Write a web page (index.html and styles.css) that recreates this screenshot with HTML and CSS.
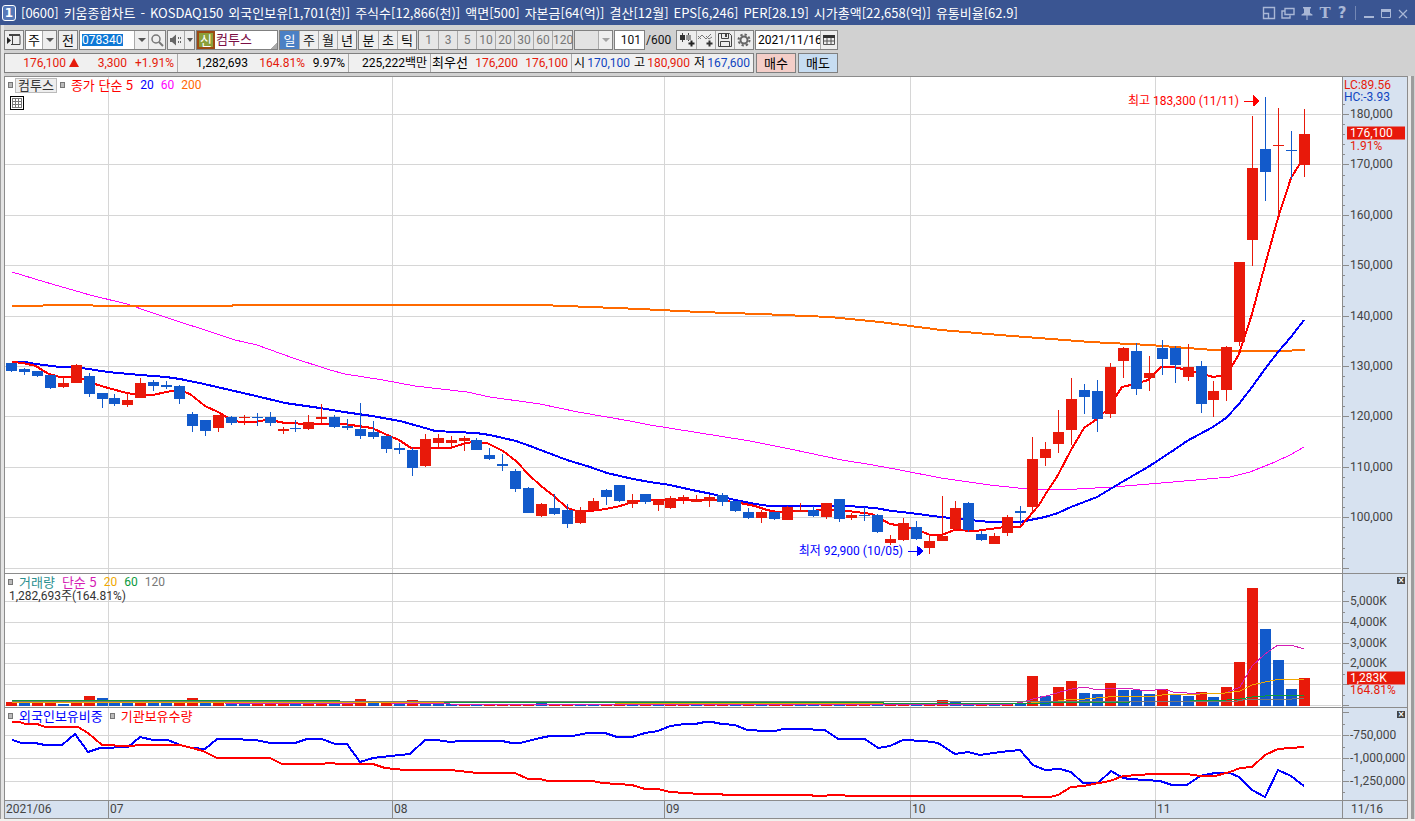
FILE: index.html
```html
<!DOCTYPE html>
<html lang="ko">
<head>
<meta charset="utf-8">
<title>[0600] 키움종합차트</title>
<link rel="stylesheet" href="styles.css">
</head>
<body>
<div class="window">
  <header class="titlebar">
    <span class="badge">1</span>
    <h1 class="title"><span>[0600]</span><span>키움종합차트</span><span>-</span><span>KOSDAQ150</span><span>외국인보유[1,701(천)]</span><span>주식수[12,866(천)]</span><span>액면[500]</span><span>자본금[64(억)]</span><span>결산[12월]</span><span>EPS[6,246]</span><span>PER[28.19]</span><span>시가총액[22,658(억)]</span><span>유통비율[62.9]</span></h1>
    <div class="win-tools">
      <button aria-label="크기"><svg width="14" height="14" viewBox="0 0 14 14"><path d="M1.5 1.5h11v11h-11zM1.5 7.5h5v5" fill="none" stroke="currentColor" stroke-width="1.4"/></svg></button>
      <button aria-label="복사"><svg width="14" height="14" viewBox="0 0 14 14"><path d="M4 2.5h9v6H4zM3.500 5H1v7h8V9.500" fill="none" stroke="currentColor" stroke-width="1.4"/></svg></button>
      <button aria-label="고정"><svg width="14" height="14" viewBox="0 0 14 14"><path d="M3 1h8v1L10 3v4l2.500 1.500V9.500h-11V8.500L4 7V3L3 2zM6.500 9h1v5h-1z" fill="currentColor"/></svg></button>
      <button aria-label="글꼴" class="glyph serif">T</button>
      <button aria-label="도움말" class="glyph">?</button>
      <i class="divider"></i>
      <button aria-label="최소화"><svg width="12" height="14" viewBox="0 0 12 14"><path d="M1 10h10v2H1z" fill="currentColor"/></svg></button>
      <button aria-label="최대화"><svg width="12" height="14" viewBox="0 0 12 14"><path d="M1.500 3.500h9v8h-9z" fill="none" stroke="currentColor"/><path d="M1 3h10v3H1z" fill="currentColor"/></svg></button>
      <button aria-label="닫기"><svg width="12" height="14" viewBox="0 0 12 14"><path d="M2 4l8 8M10 4l-8 8" stroke="currentColor" stroke-width="1.2"/></svg></button>
    </div>
  </header>

  <div class="toolbar">
    <button class="btn" aria-label="패널"><svg width="16" height="16" viewBox="0 0 16 16"><path d="M3 3.500h11v9H5M6.500 3v10" fill="none" stroke="#444"/><path d="M3 2h11v2H3z" fill="#444"/><path d="M1 5l4 3.500L1 12z" fill="#222"/></svg></button>
    <span class="combo w32"><select aria-label="구분"><option>주</option></select><span class="drop"></span></span>
    <button class="btn">전</button>
    <span class="combo code"><input aria-label="종목코드" value="078340" class="code-input"><button class="drop" aria-label="종목 목록"></button><button class="find" aria-label="검색"><svg width="14" height="14" viewBox="0 0 14 14"><circle cx="6" cy="6" r="4" fill="none" stroke="#777" stroke-width="1.500"/><path d="M9 9l4 4" stroke="#777" stroke-width="2"/></svg></button></span>
    <span class="combo sound"><button class="speaker" aria-label="소리"><svg width="16" height="14" viewBox="0 0 16 14"><path d="M2 5h2l4-3.500v11L4 9H2z" fill="#666"/><path d="M10 4h1v2h-1zM10 8h1v2h-1zM12 4h1v2h-1zM12 8h1v2h-1z" fill="#666"/></svg></button><button class="drop" aria-label="소리 설정"></button></span>
    <span class="stock"><b class="credit">신</b><span class="name">컴투스</span></span>
    <span class="group"><button class="on">일</button><button>주</button><button>월</button><button>년</button></span>
    <span class="group"><button>분</button><button>초</button><button>틱</button></span>
    <span class="group off num"><button disabled>1</button><button disabled>3</button><button disabled>5</button><button disabled>10</button><button disabled>20</button><button disabled>30</button><button disabled>60</button><button disabled>120</button></span>
    <span class="combo w39 faded"><select aria-label="분틱 선택" disabled><option></option></select><span class="drop"></span></span>
    <input class="count" aria-label="봉 수" value="101">
    <span class="total num">/600</span>
    <span class="group icons">
      <button aria-label="차트 추가"><svg width="18" height="18" viewBox="0 0 18 18"><path d="M4.500 2v9M10.500 2v8" stroke="#444"/><path d="M2 4h5v5H2z" fill="#333"/><path d="M8 4h5v5H8z" fill="#999"/><path d="M13.500 9.500v6M10.500 12.500h6" stroke="#222" stroke-width="2"/></svg></button>
      <button aria-label="지표 추가"><svg width="18" height="18" viewBox="0 0 18 18"><path d="M1 8l4-4 4 4 2-2 3-3M1 5l3 3M9 5l3 3 3-2" fill="none" stroke="#777"/><path d="M12.500 9.500v6M9.500 12.500h6" stroke="#333" stroke-width="2"/></svg></button>
      <button aria-label="저장"><svg width="18" height="18" viewBox="0 0 18 18"><path d="M2.500 2.500h11l2 2v11h-13zM5.500 2.500v5h7v-5M4.500 15.500v-5h9v5" fill="none" stroke="#444"/><path d="M9 3h2v3H9z" fill="#444"/></svg></button>
      <button aria-label="설정"><svg width="18" height="18" viewBox="0 0 18 18"><circle cx="9" cy="9" r="5.500" fill="none" stroke="#666" stroke-width="2" stroke-dasharray="2.300 2"/><circle cx="9" cy="9" r="3.500" fill="none" stroke="#666" stroke-width="2"/></svg></button>
    </span>
    <span class="combo date"><input aria-label="날짜" value="2021/11/16"><button class="find" aria-label="달력"><svg width="14" height="14" viewBox="0 0 14 14"><path d="M1.500 2.500h11v9h-11zM5 5v6M9 5v6M2 8h10" fill="none" stroke="#555"/><path d="M1 2h12v3H1z" fill="#333"/></svg></button></span>
  </div>

  <div class="quote">
    <div class="quote-box num">
      <div class="cell c1 up"><span>176,100 <svg width="10" height="9" viewBox="0 0 10 9"><path d="M5 0l5 9H0z" fill="currentColor"/></svg></span><span>3,300</span><span>+1.91%</span></div>
      <div class="cell c2"><span>1,282,693</span><span class="up">164.81%</span><span>9.97%</span></div>
      <div class="cell c3"><span>225,222백만</span></div>
      <div class="cell c4"><span class="ko">최우선</span><span class="up">176,200</span><span class="up">176,100</span></div>
      <div class="cell c5"><span>시</span><span class="down">170,100</span><span>고</span><span class="up">180,900</span><span>저</span><span class="down">167,600</span></div>
    </div>
    <button class="buy">매수</button>
    <button class="sell">매도</button>
  </div>

  <main class="chart">
    <section class="panel price">
      <div class="plot"><svg id="price" viewBox="5 77 1337 496" preserveAspectRatio="none"></svg>
        <div class="legend">
          <p><i class="dot"></i><button class="stock-tag">컴투스</button><i class="dot"></i><span class="pure-red">종가 단순 5</span><span class="pure-blue num">20</span><span class="magenta num">60</span><span class="orange num">200</span></p>
          <button class="sheet" aria-label="데이터 표"><svg width="14" height="14" viewBox="0 0 14 14"><path d="M.5.500h13v13H.5z" fill="#fff" stroke="#000"/><path d="M2.500 2.500h9v9h-9zM2 5.500h10M2 8.500h10M5.500 3v9M8.500 3v9" fill="none" stroke="#777"/></svg></button>
        </div>
        <div class="marks num" id="marks"></div>
      </div>
      <div class="axis num" id="priceAxis"></div>
    </section>
    <section class="panel volume">
      <div class="plot"><svg id="volume" viewBox="5 574 1337 133" preserveAspectRatio="none"></svg>
        <div class="legend">
          <p><i class="dot"></i><span class="teal">거래량</span><span class="pink">단순 5</span><span class="gold num">20</span><span class="green num">60</span><span class="gray num">120</span></p>
          <p class="sub num">1,282,693주(164.81%)</p>
        </div>
      </div>
      <div class="axis num" id="volumeAxis"><button class="close" aria-label="거래량 닫기">×</button></div>
    </section>
    <section class="panel holders">
      <div class="plot"><svg id="holders" viewBox="5 708 1337 92" preserveAspectRatio="none"></svg>
        <div class="legend">
          <p><i class="dot"></i><span class="pure-blue">외국인보유비중</span><i class="dot"></i><span class="pure-red">기관보유수량</span></p>
        </div>
      </div>
      <div class="axis num" id="holdersAxis"><button class="close" aria-label="보유 닫기">×</button></div>
    </section>
    <footer class="timeline num">
      <div class="months"><span>2021/06</span><span>07</span><span>08</span><span>09</span><span>10</span><span>11</span></div>
      <div class="today">11/16</div>
    </footer>
  </main>
</div>
<script src="chart.js"></script>
</body>
</html>
```

FILE: styles.css
```css
* { box-sizing: border-box; }
body, h1, p { margin: 0; }
body, button, input, select {
  font-family: "Noto Sans CJK KR", sans-serif;
  font-size: 13px;
  line-height: 16px;
}
.num, .num button, input { font-family: Roboto, "Noto Sans CJK KR", sans-serif; font-size: 12px; }
button, input, select { border: 0; padding: 0; background: none; color: inherit; border-radius: 0; appearance: none; }
svg { display: block; }

.window {
  min-height: 100vh;
  display: flex;
  flex-direction: column;
  background: linear-gradient(90deg, #9c9c9c 1px, #e4e4e4 1px 4px, #d1d1d1 4px);
  border-bottom: 2px solid #f1f1ee;
}

/* title bar */
.titlebar { display: flex; align-items: center; height: 25px; background: #3a5592; color: #fff; padding: 0 6px 0 2px; }
.badge { width: 14px; height: 16px; border: 1px solid #fff; border-radius: 3px; background: #5578b8; font: bold 12px/14px "DejaVu Sans", sans-serif; text-align: center; }
.title { flex: 1; display: flex; gap: 5px; margin-left: 5px; font-size: 13px; font-weight: 400; white-space: nowrap; }
.win-tools { display: flex; align-items: center; gap: 5px; color: #a9b7d6; }
.glyph { width: 12px; font: bold 15px/16px "DejaVu Sans", sans-serif; }
.serif { font-family: "DejaVu Serif", serif; }
.divider { width: 1px; height: 14px; background: #7488b5; margin: 0 2px; }

/* toolbar */
.toolbar { display: flex; gap: 1px; padding: 5px 0 3px 4px; color: #111; }
.toolbar > * { flex: none; height: 20px; }
.btn { width: 20px; border: 1px solid #808080; background: #eee; display: grid; place-items: center; }
.combo { display: flex; border: 1px solid #808080; background: #fff; }
.combo select, .combo input { flex: 1; min-width: 0; padding-left: 2px; color: #000; opacity: 1; }
.drop, .find, .speaker { width: 14px; background: #eee; border-left: 1px solid #aaa; display: grid; place-items: center; }
.drop::before { content: ""; border: 4px solid transparent; border-top: 4px solid #555; border-bottom: 0; }
.find { width: 17px; }
.speaker { width: 17px; border-left: 0; }
.w32 { width: 32px; }
.w39 { width: 39px; }
.code { width: 87px; }
.combo .code-input { background: linear-gradient(#0d78d6, #0d78d6) 2px 3px / 41px 12px no-repeat; color: #fff; }
.sound { width: 28px; }
.sound .drop { width: 10px; }
.sound .drop::before { border-width: 4px 3px 0; }
.stock { width: 82px; display: flex; border: 1px solid #808080; background: linear-gradient(135deg, transparent 50%, #aaa 50%) right bottom / 7px 7px no-repeat #fff; }
.credit { width: 18px; border: 2px solid #9c4b12; background: #8ba03a; color: #fff; font-weight: 400; text-align: center; line-height: 14px; }
.name { color: #7b0f45; padding-left: 1px; }
.group { display: flex; border: 1px solid #808080; background: #eee; }
.group button { width: 19px; border-left: 1px solid #aaa; display: grid; place-items: center; }
.group button:first-child { border-left: 0; }
.group .on { background: #4b80c4; color: #fff; }
.off { color: #777; background: #e6e6e6; }
.off button:last-child { width: 20px; }
.faded { background: #e2e2e2; }
.faded .drop::before { opacity: .5; }
.count { width: 31px; border: 1px solid #808080; background: #fff; text-align: right; padding-right: 3px; }
.total { width: 29px; line-height: 20px; }
.date { width: 83px; }

/* quote row */
.quote { display: flex; gap: 2px; padding: 0 0 2px 4px; height: 23px; }
.quote-box { display: flex; width: 750px; height: 20px; border: 1px solid #808080; background: #f0f0f0; }
.cell { display: grid; align-items: center; justify-items: end; border-left: 1px solid #aaa; white-space: nowrap; line-height: 18px; padding-right: 3px; }
.cell svg { display: inline-block; }
.cell:first-child { border-left: 0; }
.c1 { width: 172px; grid-template-columns: 74px 48px 1fr; }
.c2 { width: 171px; grid-template-columns: 70px 57px 1fr; }
.c3 { width: 82px; }
.c4 { width: 141px; grid-template-columns: 37px 50px 1fr; }
.c5 { flex: 1; grid-template-columns: 13px 45px 15px 45px 15px 1fr; }
.ko { font-size: 13px; }
.up { color: #e51b0b; }
.down { color: #1045c0; }
.buy, .sell { width: 40px; height: 20px; border: 1px solid #808080; background: #f4cec8; }
.sell { background: #c7ddf2; }

/* chart */
.chart {
  flex: 1;
  display: flex;
  flex-direction: column;
  margin: 0 7px 0 4px;
  border: 1px solid #8c8c8c;
  background: #fff;
  box-shadow: 3px 0 #e8e8e8, 6px 0 #9c9c9c;
}
.panel { display: grid; grid-template-columns: minmax(0, 1fr) 65px; grid-template-rows: minmax(0, 1fr); border-bottom: 1px solid #8c8c8c; }
.price { flex: 497 1 0; }
.volume { flex: 134 1 0; }
.holders { flex: 93 1 0; }
.plot { display: grid; grid-template: minmax(0, 1fr) / minmax(0, 1fr); }
.plot > * { grid-area: 1 / 1; }
.plot > svg, .axis > svg { width: 100%; height: 100%; }
.plot svg *, .axis svg * { shape-rendering: crispEdges; }
.marks { position: relative; }
.mark { position: absolute; display: flex; align-items: center; gap: 5px; transform: translate(-100%, -50%); white-space: nowrap; }
.legend { position: relative; padding-left: 3px; align-self: start; color: #333; line-height: 12px; }
.legend p { display: flex; align-items: center; gap: 7px; height: 16px; }
.legend .dot { width: 5px; height: 6px; border: 1px solid #777; background: #bbb; }
.legend .dot + * { margin-left: -1px; }
.legend .sub { height: 12px; padding-left: 1px; }
.legend .stock-tag { border: 1px solid #bbb; background: #eee; padding: 0 2px; height: 15px; line-height: 12px; margin: 0 -4px 0 -5px; }
.sheet { margin: 3px 0 0 2px; }
.pure-red { color: #f00; }
.pure-blue { color: #00f; }
.magenta { color: #f0f; }
.orange { color: #ff6a00; }
.teal { color: #2a9090; }
.pink { color: #d41cb4; }
.gold { color: #f0a800; }
.green { color: #0a9a3c; }
.gray { color: #777; }

.axis { position: relative; display: grid; grid-template: minmax(0, 1fr) / minmax(0, 1fr); background: #d7e2f0; border-left: 1px solid #8c8c8c; color: #444; }
.axis > svg { grid-area: 1 / 1; }
.tick { position: absolute; left: 7px; transform: translateY(-50%); white-space: nowrap; line-height: 12px; }
.tick.flag { left: 4px; right: 2px; padding-left: 3px; background: #e8190a; color: #fff; line-height: 13px; }
.tick.edge { left: 1px; }
.tick.up { color: #e51b0b; }
.close { position: absolute; right: 2px; top: 3px; width: 8px; height: 7px; background: #444; color: #fff; }
.axis .close { font: bold 8px/7px "DejaVu Sans", sans-serif; }

.timeline { display: grid; grid-template-columns: minmax(0, 1fr) 65px; height: 17px; background: #d7e2f0; color: #444; }
.months { display: grid; grid-template-columns: 103fr 284fr 272fr 246fr 245fr 187fr; }
.months span { border-left: 1px solid #8c8c8c; padding-left: 1px; line-height: 16px; }
.months span:first-child { border-left: 0; }
.today { border-left: 1px solid #8c8c8c; padding-left: 8px; line-height: 16px; }
```

FILE: chart.js
```js
const RED = "#e8190a", BLUE = "#125acb", GRID = "#d6d6d6";
const centre = i => 11.5 + 12.93 * i;

// high, open/close top, open/close bottom, low, direction
const candles = `363 363 371 372 d,368 369 372 375 d,371 371 376 377 d,375 375 388 389 d,377 383 387 388 u,364 365 383 383 u,373 376 394 397 d,393 393 399 408 d,394 398 404 406 d,393 400 405 407 u,
378 383 398 398 u,380 382 386 391 d,381 385 387 389 d,385 386 399 404 d,412 414 426 432 d,420 420 431 436 d,415 415 428 432 u,416 417 423 425 d,415 417 418 425 u,413 417 418 426 d,
412 417 423 426 d,427 429 431 434 u,420 428 429 432 d,415 422 429 430 u,404 417 419 423 u,415 417 427 428 d,419 426 428 430 d,403 429 436 439 d,421 432 437 439 d,436 436 449 453 d,
443 448 450 454 d,448 450 468 476 d,434 439 466 467 u,434 438 443 447 u,436 440 443 447 u,436 438 441 451 u,438 440 450 450 d,448 455 459 460 d,454 464 466 471 d,469 471 489 492 d,
487 488 513 513 d,503 504 516 517 u,494 508 514 515 d,504 510 524 528 d,507 510 523 524 u,498 501 510 510 u,489 490 497 505 d,485 485 501 502 d,494 500 504 508 u,494 494 502 504 d,
500 500 505 511 u,496 498 508 509 u,495 497 499 504 u,495 500 502 502 u,495 497 501 507 u,493 495 502 506 d,501 501 511 512 d,508 512 518 519 d,510 512 518 523 u,512 512 519 520 d,
506 507 520 520 u,503 510 512 512 u,506 510 516 517 d,503 503 517 519 u,499 499 519 522 d,513 515 518 520 u,507 515 516 521 d,514 515 532 533 d,535 539 543 545 u,518 523 540 541 u,
521 527 539 540 d,535 541 548 554 u,496 536 541 541 u,501 508 529 530 u,502 503 530 532 d,531 534 540 541 d,533 536 544 544 u,515 517 533 536 u,506 511 513 525 d,437 459 507 513 u,
442 449 458 466 u,410 432 444 453 u,378 399 430 445 u,384 390 397 414 d,380 391 419 432 d,363 367 414 418 u,347 348 361 378 u,343 351 389 395 d,356 373 378 391 u,340 348 359 375 d,
346 348 365 383 d,344 367 377 381 u,361 366 404 413 d,381 391 400 417 u,346 347 390 401 u,262 262 342 346 u,116 168 240 266 u,97 149 172 201 d,108 145 146 216 u,131 150 151 179 d,109 134 165 177 u`
  .split(",").map(s => s.trim().split(" "));

const volumeTops = [702,703,703,703,704,703,696,698,703,703,702,703,703,703,698,702,702,703,704,704,704,704,704,704,704,704,704,699,703,703,704,700,703,704,704,704,704,704,704,704,704,703,704,704,704,704,704,704,704,704,704,704,704,704,704,704,704,704,704,704,704,704,704,704,703,704,704,703,703,703,703,703,700,702,703,704,704,703,703,676,696,687,681,693,694,683,690,690,694,689,694,696,692,697,687,662,588,629,660,689,678];
const volumeDirs = "uduuduuddd" + "udduududdu" + "uuduuduudu" + "duddduduuu" + "uduudduudu"
  + "duuduududu" + "udduduuduu" + "duuddududu" + "duudduddd" + "u" + "dduduuuddd" + "u";

const priceLines = [
  ["#f0f", 1, "12,272 45,282 90,295 127,304 150,312 180,322 205,330 235,340 257,345 293,358 330,370 345,374 383,380 415,386 467,392 490,397 540,404 578,412 630,421 650,425 700,433 750,441 790,449 842,460 873,465 900,470 941,478 990,485 1027,489 1077,489 1113,487 1173,482 1230,477 1250,472 1275,462 1290,455 1304,447"],
  ["#ff6a00", 2, "12,306 75,305 110,306 230,306 235,305 540,305 590,307 640,309 700,312 760,314 830,317 880,322 941,330 1012,336 1090,342 1150,345 1187,348 1213,350 1235,351 1280,351 1305,350"],
  ["#00f", 2, "12,362 25,362 36,364 60,367 82,368 95,370 108,372 140,375 166,377 180,379 204,384 230,390 256,396 285,403 320,408 344,412 372,416 400,421 425,428 435,431 476,433 490,435 516,441 530,446 551,454 567,460 590,467 607,473 633,479 650,482 670,485 692,490 712,494 735,500 755,504 770,506 848,506 875,508 892,511 910,513 941,517 960,519 980,521 990,522 1020,522 1045,517 1058,513 1071,507 1097,497 1122,482 1148,467 1174,450 1187,441 1200,434 1213,427 1226,418 1239,404 1252,387 1265,369 1278,352 1291,337 1304,320"],
  ["#f00", 2, "12,362 23,363 36,366 42,370 49,374 60,377 72,377 83,379 95,384 108,388 127,393 140,395 153,395 166,392 179,390 190,394 205,406 218,412 230,419 240,422 255,422 266,420 275,421 285,423 310,424 344,424 372,428 385,434 399,440 411,448 450,448 463,444 472,442 487,443 503,451 516,461 529,475 541,486 554,496 567,508 577,511 590,511 606,509 620,506 633,502 645,500 720,500 740,503 755,506 767,510 777,512 795,511 812,511 820,510 848,511 872,514 890,524 904,526 918,530 930,535 942,535 954,530 975,531 990,529 1005,527 1020,527 1028,518 1039,505 1045,495 1058,475 1071,450 1084,428 1097,419 1110,407 1116,396 1122,387 1135,384 1148,380 1161,367 1174,367 1187,370 1200,373 1213,377 1225,375 1232,366 1239,354 1252,314 1265,265 1278,218 1291,178 1304,157"]
];
const volumeLines = [
  ["#d41cb4", 1, "200,702.500 210,702.500 240,703.500 350,703.500 360,702.500 480,704.500 630,704.500 780,704.500 1012,704 1023,702 1033,699 1050,695 1060,692 1072,689 1084,687 1098,690 1112,688 1125,688 1140,690 1155,690 1163,689 1173,692 1187,693 1200,693 1213,694 1225,693 1233,690 1240,687 1252,666 1265,654 1278,645 1291,645 1304,649"],
  ["#f0a800", 1, "12,702.500 445,702.500 780,703.500 1027,703.500 1040,702 1058,701 1071,699 1085,699 1108,697 1130,696 1155,696 1170,694 1200,694 1225,693 1240,691 1252,685 1265,682 1280,679 1290,680 1304,679"],
  ["#0a9a3c", 1, "12,700.500 340,700.500"],
  ["#0a9a3c", 1, "444,702.500 767,702.500 1000,703.500 1100,702.500 1160,701.500 1220,700.500 1240,699 1252,697 1278,695 1304,695"],
  ["#777", 1, "12,701.500 767,701.500 1100,701.500 1235,701.500 1245,699.500 1280,699.500 1304,698.500"]
];
const holderLines = [
  ["#00f", 2, "12,740 22,743 35,743 45,745 62,745 75,734 88,752 100,748 128,747 140,737 153,740 168,740 180,745 192,748 205,749 217,739 230,739 256,740 270,743 295,743 307,739 322,739 335,744 347,744 360,762 373,758 390,756 410,754 425,740 437,740 450,742 460,741 502,741 512,743 520,743 540,738 550,736 572,736 588,733 605,733 617,737 632,737 645,733 658,731 670,726 685,724 695,724 705,722 712,722 722,724 735,725 747,730 767,731 775,731 783,729 800,729 825,730 838,739 865,739 878,748 890,746 903,740 925,741 938,743 955,754 968,752 980,755 1000,752 1020,750 1033,765 1045,770 1060,769 1071,772 1083,783 1098,783 1111,771 1123,778 1130,779 1160,781 1172,785 1187,785 1200,776 1215,773 1230,773 1239,777 1252,790 1265,797 1278,770 1291,776 1304,786"],
  ["#f00", 2, "12,722 20,722 25,724 37,724 45,727 78,727 88,733 102,745 128,746 142,745 180,745 192,748 203,751 217,758 270,758 282,764 320,764 330,763 340,764 373,764 385,768 405,770 450,770 478,773 515,773 528,779 540,779 548,781 592,781 603,783 632,785 645,789 658,789 670,792 685,793 700,794 720,794 725,795 810,795 815,796 840,795 850,796 1020,796 1025,797 1050,797 1058,795 1071,787 1083,786 1110,781 1123,776 1140,775 1150,774 1187,774 1200,776 1215,776 1230,772 1240,768 1252,767 1265,755 1278,749 1290,748 1304,747"]
];

const months = [108.5, 392.5, 664.5, 910.5, 1155.5];
const hline = (y, a, b, c) => `<path d="M${a} ${y + 0.5}H${b}" stroke="${c}"/>`;
const grid = (ys, top, bottom) =>
  ys.map(y => hline(y, 5, 1341, GRID)).join("") +
  months.map(x => `<path d="M${x} ${top}V${bottom}" stroke="${GRID}"/>`).join("");
const lines = list => list.map(([c, w, p]) =>
  `<polyline points="${p}" fill="none" stroke="${c}" stroke-width="${w}" stroke-linejoin="round"/>`).join("");
const put = (id, html) => { document.getElementById(id).innerHTML = html; };

const priceGrid = [114, 164, 215, 265, 316, 366, 416, 467, 517, 568];
put("price", grid(priceGrid, 77, 573) + lines(priceLines) + candles.map(([h, t, b, l, d], i) => {
  const x = Math.floor(centre(i)), c = d === "u" ? RED : BLUE;
  return `<path d="M${x} ${h}h1V${l}h-1z" fill="${c}"/><rect x="${x - 5}" y="${t}" width="11" height="${b - t}" fill="${c}"/>`;
}).join(""));

const volumeGrid = [601, 622, 643, 663, 684];
put("volume", grid([...volumeGrid, 705], 574, 707) + volumeTops.map((t, i) =>
  `<rect x="${Math.floor(centre(i)) - 5}" y="${t}" width="11" height="${706 - t}" fill="${volumeDirs[i] === "u" ? RED : BLUE}"/>`
).join("") + lines(volumeLines));

const holderGrid = [735, 758, 781];
put("holders", grid(holderGrid, 708, 800) + lines(holderLines));

// axis ticks and labels
function axis(id, top, height, major, minor, labels) {
  const ticks = major.map(y => hline(y, 0, 6, "#8c8c8c")).join("") + minor.map(y => hline(y, 0, 2, "#8c8c8c")).join("");
  const spans = labels.map(([y, text, cls = "", color = ""]) =>
    `<span class="tick ${cls} ${color}" style="top:${((y - top) / height * 100).toFixed(2)}%">${text}</span>`).join("");
  document.getElementById(id).insertAdjacentHTML("afterbegin",
    `<svg viewBox="0 ${top} 64 ${height}" preserveAspectRatio="none">${ticks}</svg>${spans}`);
}
const priceMinor = [];
for (let y = 104; y < 572; y += 10.08) priceMinor.push(Math.round(y));
axis("priceAxis", 77, 496, priceGrid, priceMinor, [
  [85, "LC:89.56", "edge", "up"], [97, "HC:-3.93", "edge", "down"],
  ...priceGrid.slice(0, 9).map((y, i) => [y, `${180 - i * 10},000`]),
  [146, "1.91%", "", "up"], [133.5, "176,100", "flag"]
]);
axis("volumeAxis", 574, 133, [...volumeGrid, 705], [591, 612, 633, 653, 674, 695], [
  [601, "5,000K"], [622, "4,000K"], [643, "3,000K"], [663, "2,000K"],
  [690, "164.81%", "", "up"], [677.5, "1,283K", "flag"]
]);
axis("holdersAxis", 708, 92, [712, ...holderGrid], [724, 747, 770, 792], [
  [735, "-750,000"], [758, "-1,000,000"], [781, "-1,250,000"]
]);

// extreme price marks
const arrow = `<svg width="16" height="12" viewBox="0 0 16 12"><path d="M0 6h9" stroke="currentColor"/><path d="M9 0l7 6-7 6z" fill="currentColor"/></svg>`;
put("marks", [[1260, 101, "최고 183,300 (11/11)", "pure-red"], [924, 551, "최저 92,900 (10/05)", "pure-blue"]].map(([x, y, t, c]) =>
  `<span class="mark ${c}" style="left:${((x - 5) / 13.37).toFixed(2)}%;top:${((y - 77) / 4.96).toFixed(2)}%">${t}${arrow}</span>`).join(""));
```
